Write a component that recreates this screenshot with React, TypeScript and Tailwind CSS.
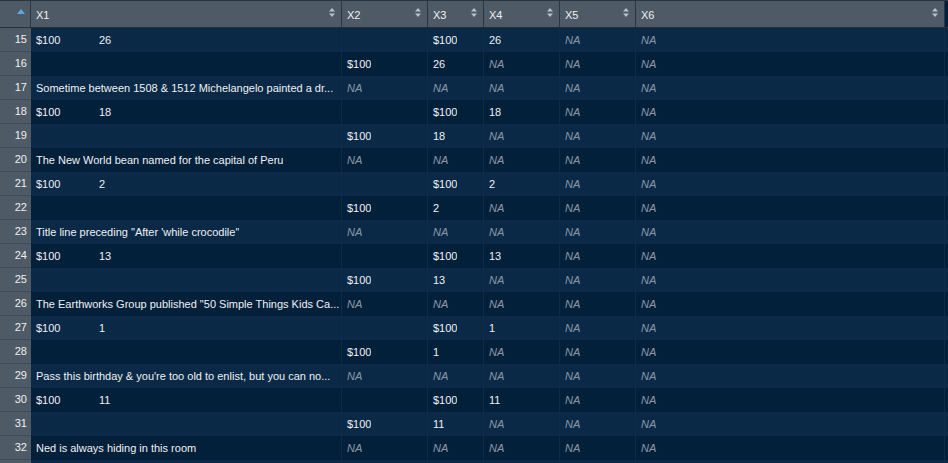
import React from 'react'

type Row = { n: number; cells: (string | null)[] }

const NA = null

const rows: Row[] = [
  { n: 15, cells: ['$100|26', '', '$100', '26', NA, NA] },
  { n: 16, cells: ['', '$100', '26', NA, NA, NA] },
  { n: 17, cells: ['Sometime between 1508 & 1512 Michelangelo painted a dr...', NA, NA, NA, NA, NA] },
  { n: 18, cells: ['$100|18', '', '$100', '18', NA, NA] },
  { n: 19, cells: ['', '$100', '18', NA, NA, NA] },
  { n: 20, cells: ['The New World bean named for the capital of Peru', NA, NA, NA, NA, NA] },
  { n: 21, cells: ['$100|2', '', '$100', '2', NA, NA] },
  { n: 22, cells: ['', '$100', '2', NA, NA, NA] },
  { n: 23, cells: ['Title line preceding "After \'while crocodile"', NA, NA, NA, NA, NA] },
  { n: 24, cells: ['$100|13', '', '$100', '13', NA, NA] },
  { n: 25, cells: ['', '$100', '13', NA, NA, NA] },
  { n: 26, cells: ['The Earthworks Group published "50 Simple Things Kids Ca...', NA, NA, NA, NA, NA] },
  { n: 27, cells: ['$100|1', '', '$100', '1', NA, NA] },
  { n: 28, cells: ['', '$100', '1', NA, NA, NA] },
  { n: 29, cells: ["Pass this birthday & you're too old to enlist, but you can no...", NA, NA, NA, NA, NA] },
  { n: 30, cells: ['$100|11', '', '$100', '11', NA, NA] },
  { n: 31, cells: ['', '$100', '11', NA, NA, NA] },
  { n: 32, cells: ['Ned is always hiding in this room', NA, NA, NA, NA, NA] },
  // next row only peeks in at the bottom edge
  { n: 0, cells: ['', '', '', '', '', ''] },
]

const cols = ['X1', 'X2', 'X3', 'X4', 'X5', 'X6']

function SortIcon() {
  return (
    <svg width="6" height="9" viewBox="0 0 6 9" className="shrink-0">
      <path d="M3 0 L6 3.5 L0 3.5 Z" fill="#b9c2ca" />
      <path d="M3 9 L6 5.5 L0 5.5 Z" fill="#b9c2ca" />
    </svg>
  )
}

function Cell({ value, first }: { value: string | null; first?: boolean }) {
  if (value === null) {
    return <span className="italic text-[#8c9aa7]">NA</span>
  }
  if (first && value.includes('|')) {
    const [a, b] = value.split('|')
    return (
      <span className="text-[#eef1f4]">
        <span className="inline-block w-[63px]">{a}</span>
        {b}
      </span>
    )
  }
  return <span className="text-[#eef1f4] overflow-hidden text-clip">{value}</span>
}

export default function App() {
  const grid = 'grid grid-cols-[31px_311px_86px_56px_76px_76px_309px_3px]'
  return (
    <div
      className="w-[948px] h-[463px] overflow-hidden bg-[#02203b] text-[11px]"
      style={{ fontFamily: '"Liberation Sans", Arial, sans-serif' }}
    >
      <div className={`${grid} h-[28px] bg-[#4e5a65] border-t border-[#2a343d] border-b border-b-[#26313b]`}>
        <div className="flex items-start justify-end pr-[5px] pt-[8px] border-r border-[#2b3640]">
          <svg width="8" height="5" viewBox="0 0 8 5">
            <path d="M4 0 L8 5 L0 5 Z" fill="#5aa9e6" />
          </svg>
        </div>
        {cols.map(c => (
          <div key={c} className="flex items-center justify-between pl-[5px] pr-[6px] border-r border-[#2b3640] text-[#eef1f4]">
            <span className="pt-[2px]">{c}</span>
            <span className="-mt-[4px]"><SortIcon /></span>
          </div>
        ))}
        <div className="bg-[#02203b]" />
      </div>
      {rows.map((r, i) => (
        <div key={i} className={`${grid} h-[24px] ${i % 2 === 0 ? 'bg-[#0a2946]' : 'bg-[#03203b]'}`}>
          <div className="flex items-center justify-end pr-[4px] bg-[#4e5a65] border-b border-[#414c57] text-[#eef1f4]">
            {r.n > 0 ? r.n : ''}
          </div>
          {r.cells.map((v, j) => (
            <div key={j} className="flex items-center pl-[5px] overflow-hidden whitespace-nowrap border-r border-[#0d2c48]">
              <Cell value={v} first={j === 0} />
            </div>
          ))}
          <div />
        </div>
      ))}
    </div>
  )
}
